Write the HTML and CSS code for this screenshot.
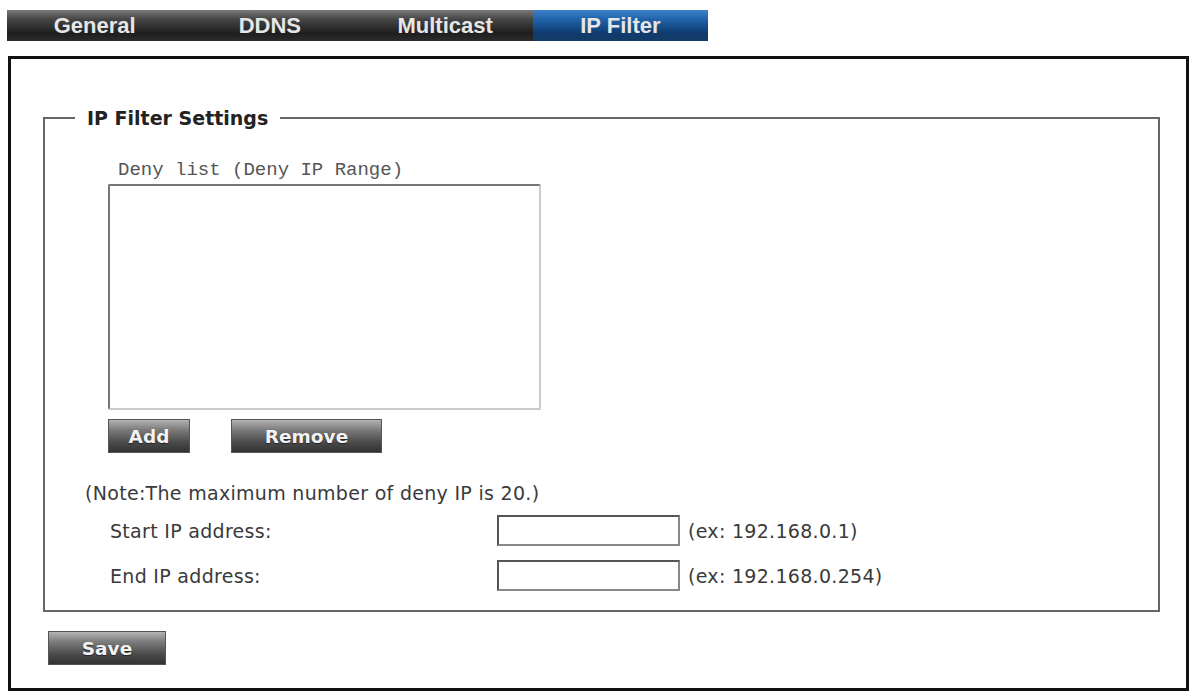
FILE: index.html
```html
<!DOCTYPE html>
<html lang="en">
<head>
<meta charset="UTF-8">
<meta name="viewport" content="width=device-width, initial-scale=1.0">
<title>IP Filter</title>
<link rel="stylesheet" href="styles.css">
</head>
<body>
<div class="tabs">
  <a class="tab">General</a>
  <a class="tab">DDNS</a>
  <a class="tab">Multicast</a>
  <a class="tab active">IP Filter</a>
</div>

<div class="panel">
  <fieldset class="group">
    <legend>IP Filter Settings</legend>

    <div class="list-title">Deny list (Deny IP Range)</div>
    <select class="deny-list" size="10"></select>

    <div class="list-buttons">
      <button class="btn btn-add">Add</button>
      <button class="btn btn-remove">Remove</button>
    </div>

    <div class="note">(Note:The maximum number of deny IP is 20.)</div>

    <div class="row">
      <label class="row-label">Start IP address:</label>
      <input type="text" class="ip-input">
      <span class="hint">(ex: 192.168.0.1)</span>
    </div>
    <div class="row">
      <label class="row-label">End IP address:</label>
      <input type="text" class="ip-input">
      <span class="hint">(ex: 192.168.0.254)</span>
    </div>
  </fieldset>

  <button class="btn btn-save">Save</button>
</div>
</body>
</html>
```

FILE: styles.css
```css
body {
  margin: 0;
  padding: 10px 0 0 0;
  background: #fff;
  font-family: "DejaVu Sans", Verdana, sans-serif;
  color: #3a3a3a;
}

/* tab strip */
.tabs {
  display: flex;
  margin-left: 7px;
  width: 701px;
  height: 31px;
}

.tab {
  flex: 1;
  display: flex;
  align-items: center;
  justify-content: center;
  font-family: "Liberation Sans Narrow", "Liberation Sans", Arial, sans-serif;
  font-weight: bold;
  font-size: 22px;
  color: #e6e6e6;
  background: linear-gradient(#7a7a7a 0%, #454545 30%, #1e1e1e 75%, #2c2c2c 100%);
}

.tab.active {
  background: linear-gradient(#3f82cb 0%, #2063aa 30%, #0f3b6e 75%, #143c66 100%);
}

/* main box */
.panel {
  box-sizing: border-box;
  margin: 15px 0 0 8px;
  width: 1181px;
  height: 635px;
  border: 3px solid #111;
  padding: 48px 26px 0 32px;
}

.group {
  margin: 0;
  padding: 0 0 19px 0;
  border: 2px solid #666;
}

.group legend {
  margin-left: 30px;
  padding: 0 12px;
  font-weight: bold;
  font-size: 19px;
  line-height: 22px;
  color: #222;
}

.list-title {
  margin: 31px 0 0 73px;
  font-family: "Liberation Mono", "Courier New", monospace;
  font-size: 19px;
  line-height: 20px;
  color: #555;
}

.deny-list {
  display: block;
  box-sizing: border-box;
  margin: 4px 0 0 63px;
  width: 433px;
  height: 226px;
  border: 2px solid;
  border-color: #777 #ccc #ccc #777;
  background: #fff;
}

.list-buttons {
  display: flex;
  gap: 41px;
  margin: 9px 0 0 63px;
}

/* grey gradient buttons */
.btn {
  box-sizing: border-box;
  height: 34px;
  border: 1px solid #555;
  background: linear-gradient(#b4b4b4 0%, #7c7c7c 30%, #4a4a4a 70%, #333 100%);
  color: #f2f2f2;
  font-family: "DejaVu Sans", Verdana, sans-serif;
  font-weight: bold;
  font-size: 18.5px;
  text-shadow: 0 1px 1px #222;
  padding: 0;
}

.btn-add { width: 82px; }
.btn-remove { width: 151px; }

.note {
  margin: 30px 0 0 40px;
  font-size: 19px;
  letter-spacing: 0.3px;
  line-height: 20px;
}

.row {
  display: flex;
  align-items: center;
  height: 31px;
  margin-top: 12px;
  font-size: 19px;
  letter-spacing: 0.3px;
}

.row + .row {
  margin-top: 14px;
}

.row-label {
  width: 387px;
  margin-left: 65px;
}

.ip-input {
  box-sizing: border-box;
  width: 183px;
  height: 31px;
  margin: 0;
  border: 2px solid;
  border-color: #555 #888 #888 #555;
}

.hint {
  margin-left: 8px;
}

.btn-save {
  display: block;
  width: 118px;
  margin: 19px 0 0 5px;
}
```
